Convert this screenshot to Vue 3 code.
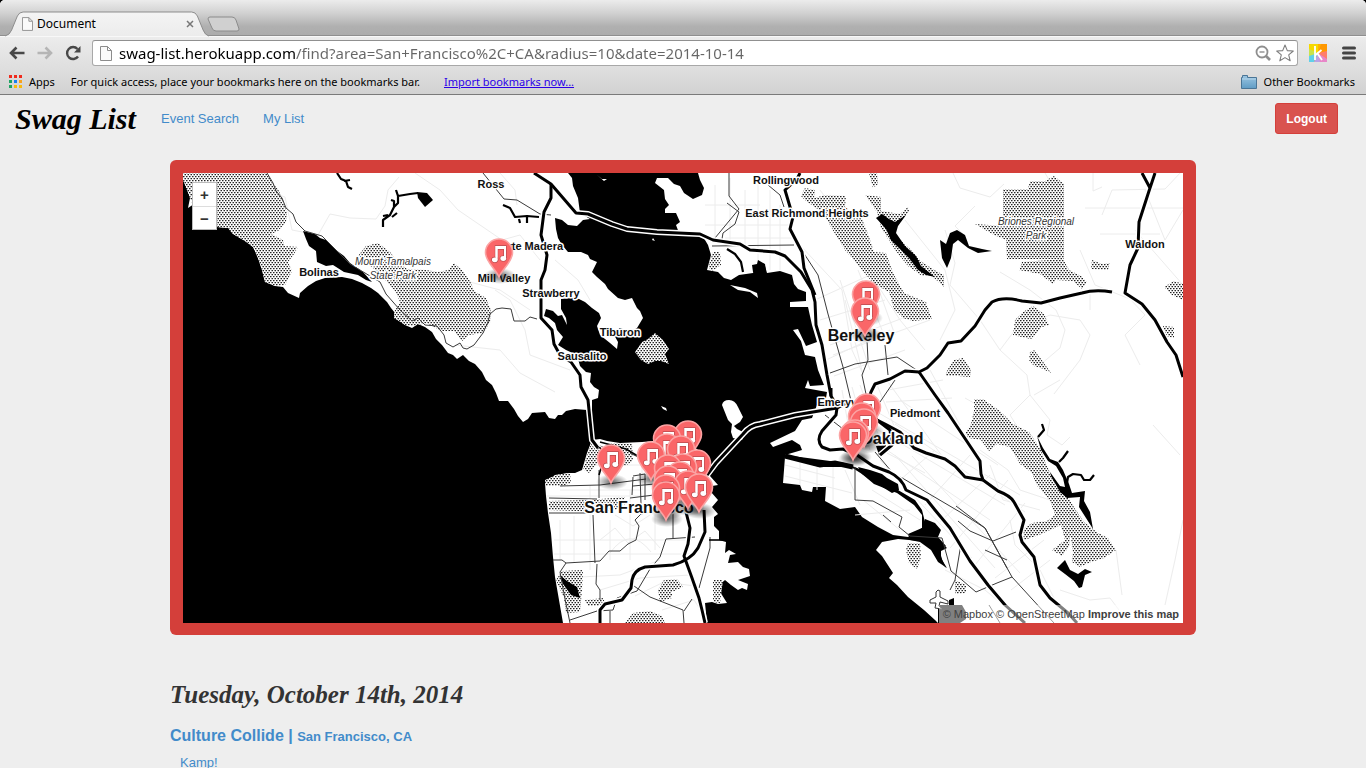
<script setup>
import { ref } from 'vue'

const address = ref('swag-list.herokuapp.com/find?area=San+Francisco%2C+CA&radius=10&date=2014-10-14')

const appDots = ['#f02a1d', '#f02a1d', '#f02a1d', '#1fa463', '#1a7ff0', '#f9a11b', '#1fa463', '#f9b90b', '#f9b90b']

const pins = [
  [499, 253], [866, 295], [865, 312],
  [867, 408], [862, 417], [864, 423], [855, 434], [853, 436],
  [688, 435], [667, 439], [667, 448], [681, 450], [651, 456], [611, 459],
  [697, 464], [683, 468], [668, 469], [680, 476], [668, 480], [688, 485],
  [699, 488], [666, 489], [666, 496]
]

const towns = [
  ['Ross', 491, 188], ['Corte Madera', 528, 250], ['Mill Valley', 504, 282], ['Strawberry', 551, 297],
  ['Tiburon', 620, 336], ['Sausalito', 582, 360], ['Bolinas', 319, 276], ['Rollingwood', 786, 184],
  ['East Richmond Heights', 807, 217], ['Waldon', 1145, 248], ['Emeryville', 845, 406], ['Piedmont', 915, 417]
]
const cities = [['San Francisco', 639, 513], ['Berkeley', 861, 341], ['Oakland', 892, 444]]
const parks = [['Mount Tamalpais', 393, 265], ['State Park', 393, 279], ['Briones Regional', 1036, 225], ['Park', 1036, 239]]

const water = 'M183 180L187 188L190 198L188 208L194 204L200 222L217 227L228 228L233 234L245 241L253 247L258 258L262 270L265 282L275 286L283 287L288 293L299 298L300 293L308 286L316 281L325 278L342 277L352 279L362 283L371 288L378 293L387 302L391 308L395 313L394 318L399 320L405 325L412 328L418 324L425 327L432 332L436 339L442 345L448 353L453 355L457 359L463 355L469 361L475 364L482 372L486 380L492 385L496 393L499 401L508 401L514 409L518 416L523 422L528 419L532 413L545 412L549 418L555 419L558 415L562 415L566 411L575 409L587 410L592 409L592 400L598 398L599 390L594 387L590 382L591 373L586 372L580 366L577 355L566 350L558 345L563 337L557 330L555 323L549 318L544 316L546 309L553 311L558 316L562 315L567 325L566 318L561 309L561 299L572 298L579 299L585 302L592 308L599 313L601 318L597 326L600 335L610 343L617 349L618 342L613 333L620 328L630 332L637 328L643 318L640 311L637 308L632 298L625 300L618 298L608 289L605 284L597 277L592 272L597 262L590 259L588 255L581 252L568 252L562 245L558 238L556 229L555 218L562 220L568 225L577 226L583 220L590 219L580 213L578 198L573 186L572 178L568 173L698 173L700 180L704 188L702 195L693 199L684 193L680 186L674 184L668 178L657 178L655 183L664 190L665 199L669 205L665 209L665 213L676 213L680 222L676 225L679 233L702 235L708 245L711 255L707 270L718 272L724 278L731 280L739 275L753 273L755 265L765 266L767 273L780 271L792 275L794 284L798 289L806 292L806 301L790 302L790 307L808 307L812 325L817 342L806 346L798 329L793 330L801 341L805 355L815 357L818 370L824 385L810 386L808 380L805 388L827 392L826 398L817 405L812 418L802 420L795 431L770 443L773 447L792 440L800 445L802 450L785 455L845 463L862 470L875 478L898 490L915 500L922 510L925 522L934 524L940 530L937 538L947 548L941 551L941 557L946 568L940 561L937 554L929 546L920 541L898 539L882 542L876 550L882 556L893 573L889 578L897 585L908 597L924 610L935 620L938 623H183Z'
const port = 'M785 457L820 467L851 467L862 474L874 484L884 488L897 493L914 505L922 515L922 528L908 537L893 535L878 527L862 517L855 507L840 509L825 501L826 487L813 487L812 492L802 490L800 485L783 483Z'
const city = 'M592 440L587 453L582 470L575 473L568 473L562 474L555 475L545 483L546 496L548 513L551 533L553 557L555 577L563 623H707L705 603L712 602L718 604L727 603L722 595L717 587L725 580L731 585L738 590L742 588L747 590L748 584L738 580L750 576L749 569L743 567L738 562L728 563L730 555L736 554L729 550L725 553L726 542L719 540L719 531L714 526L714 517L718 514L712 507L718 500L711 492L712 486L718 485L710 476L707 465L702 453L685 440H665L642 442L620 443L607 441L600 439Z'

const hatch = [
  'M183 173H267L272 182L279 191L284 204L287 213L286 222L278 231L271 234L283 240L284 246L298 247L294 254L288 262L292 271L285 285L275 286L265 282L262 270L258 258L253 247L245 241L233 234L228 228L217 227L200 222L190 198L183 180Z',
  'M358 256L366 246L378 243L390 252L398 262L407 269L426 270L438 272L448 270L454 263L462 270L470 281L474 291L486 298L491 310L490 323L483 333L469 335L462 341L454 331L441 331L427 323L412 326L405 325L394 318L394 312L400 302L396 292L386 281L374 269Z',
  'M635 352L642 342L648 339L655 333L663 340L669 349L665 354L669 364L661 361L655 361L648 364L641 360Z',
  'M801 196L805 188L815 190L814 198L826 195L846 196L845 207L862 219L869 237L874 252L886 253L893 273L904 293L926 302L932 319L913 321L903 318L894 309L889 292L873 283L858 265L845 250L834 232L822 212L806 201Z',
  'M869 173L877 173L878 184L873 188ZM865 195L881 197L881 211L900 214L908 207L909 211L893 233L910 249L922 262L936 271L944 275L944 287L932 276L922 276L908 266L896 251L881 228L877 212Z',
  'M1003 189H1028L1030 181L1045 181L1054 176L1064 184V259H1007L1006 240L994 235L975 224L1003 226Z',
  'M1022 262L1063 259L1069 270L1081 276L1087 282L1082 289L1073 281L1056 280L1053 284L1040 274L1019 270Z',
  'M1023 312L1033 306L1044 314L1049 325L1042 327L1031 339L1013 335L1015 320Z',
  'M954 360L963 358L971 370L970 377L958 376L945 376L948 369Z',
  'M1030 352L1034 350L1041 359L1046 366L1051 373L1041 368L1034 366L1029 360Z',
  'M1092 260L1102 264L1110 263L1108 270L1091 269ZM1164 287L1174 281L1183 284V300L1172 295ZM1163 326L1174 327L1174 338L1166 336Z',
  'M974 399L983 399L1000 411L1013 424L1029 432L1040 448L1046 464L1053 479L1067 495L1075 509L1084 522L1098 533L1108 538L1116 550L1104 558L1091 562L1080 567L1072 562L1073 552L1071 538L1066 524L1070 536L1069 547L1062 556L1052 550L1065 540L1061 525L1039 535L1024 540L1022 530L1032 523L1047 521L1055 515L1050 500L1038 487L1031 472L1020 464L1010 447L997 444L989 451L981 440L963 437L971 424L974 411Z',
  'M713 252L720 252L721 265L712 271L708 267Z',
  'M592 440L588 453L583 469L589 473L597 463L600 448L611 443L632 444L633 461L625 466L618 452L605 448ZM545 480L556 475L570 473L571 483L562 486L546 486ZM549 501L589 500L625 497L624 508L604 512L549 510Z',
  'M562 571L583 570L582 590L580 612L566 613L564 598L556 580ZM585 600L604 598V606L588 606ZM658 590L664 580L677 579L683 587L672 592L672 598L660 602ZM625 623L633 613L650 611L662 616L665 623ZM713 580L723 580L720 603L713 602Z',
  'M908 543H920L921 557L917 569L909 563L906 550ZM955 580L966 585L966 593L955 594Z'
]

const lakes = [
  'M303 231L315 234L320 238L326 240L336 250L344 256L350 263L363 272L372 282L366 280L358 275L344 272L333 265L326 266L317 262L316 251L309 246L306 239Z',
  'M876 218L882 214L889 219L895 222L906 215L898 226L896 233L905 246L916 256L921 266L935 277L926 275L918 270L909 258L900 249L891 240L886 229Z',
  'M940 240L946 244L950 233L957 230L965 235L969 246L982 249L992 251L978 253L968 248L958 240L953 244L951 258L947 268L942 258Z',
  'M1037 436L1043 448L1050 459L1058 462L1063 470L1069 484L1072 493L1085 491L1084 501L1090 512L1093 529L1086 518L1079 507L1080 497L1067 498L1060 492L1051 476L1050 472L1060 486L1065 487L1063 478L1056 466L1048 461L1041 450Z',
  'M1057 568L1065 560L1070 570L1078 574L1085 569L1092 572L1085 575L1082 587L1079 588L1074 581L1065 574Z',
  'M858 467L870 470L882 474L887 478L898 484L899 490L892 493L884 488L873 481L862 474ZM876 446L886 445L885 453L879 455Z',
  'M908 534L922 528L925 519L935 523L941 530L938 537L946 546L940 551L942 560L947 568L938 562L931 550L920 542L910 540Z',
  'M560 575L567 581L577 587L580 598L571 595L563 584Z',
  'M417 192L427 193L433 200L425 207L418 198Z',
  'M752 265L757 264L758 260L765 264L766 271L753 272Z'
]

const creeks = [
  'M337 173L341 179L346 181L348 187L352 189M344 181L350 180',
  'M383 227L383 220L390 215L394 207L394 201L391 200M394 207L398 203L398 196L396 190M398 196L410 194L418 193M392 217L397 213M388 215L383 216',
  'M1042 424L1044 430L1038 437M1059 462L1063 458L1068 451',
  'M1067 483L1068 477L1073 474L1081 475L1084 480L1090 480L1094 475',
  'M503 205L510 208L515 217L527 216L539 217M527 216V223M519 219L520 223',
  'M727 249L735 254L741 262L743 272'
]

const faint = [
  'M267 191L285 197L292 230L318 235L330 214L350 218L376 219L385 206L388 190L399 177',
  'M415 173L440 190L458 210L480 225L502 240L520 235L540 260M500 173L515 190L517 205M555 260L578 280L590 300M495 290L510 300L525 330L530 355L570 370',
  'M440 300L470 282L500 290L530 310M455 345L500 350L520 373L555 392',
  'M705 205H760M705 225H790M715 185V240M730 178V245M745 190V250M758 180V265M770 190V270M780 205V270M725 238H795',
  'M820 190L850 230L868 270L900 320L925 350M800 245L842 290L852 350L862 372M815 300L870 275M820 320L885 300M826 360L890 330M840 280L870 370M905 220L945 270L955 310L940 340',
  'M830 345L925 310M833 355L930 320M834 376L905 350M858 270L882 330M869 262L895 335M845 300L863 375',
  'M953 173L960 188L990 197L1004 184M975 206L955 226L965 236M1000 272L1030 290L1056 310L1065 330L1060 348L1040 365M1000 350L1015 330L1050 315L1080 320L1090 335L1080 360L1054 394M1034 395L1060 380',
  'M1093 173V191L1102 187M1102 215L1112 190L1165 189L1183 170M1085 208H1183M1100 234H1160M1090 290V310M1080 250L1095 285L1130 299L1145 315L1125 335L1140 365M1135 230L1183 285M1145 190L1165 240L1183 210',
  'M1045 173L1054 188M945 230L955 263L950 285L980 320L1000 350L1027 375L1030 395L1050 420L1047 435L1062 445L1070 437M1030 395L1010 415L1032 450',
  'M1153 425L1180 455M1183 520L1175 560L1165 605M1116 550L1122 595M1060 590L1090 600L1110 598L1119 610',
  'M546 496H650M554 540H692M554 554H690M560 520V560M574 516V562M590 485V570M610 520V560M630 490V560M642 460V490M655 500V550M560 578L620 575L660 560M600 590L640 578L690 575M592 465H680M560 490H640',
  'M600 540L615 528L628 543L645 531L660 548M615 515L633 526L650 515M610 553Q630 525 651 552M662 610L694 600L704 615M635 596L664 582L695 586',
  'M785 465L835 478M785 476L852 493M800 460V485M817 465V490M833 467V500M845 470L860 505M863 500L900 530M872 490L920 520M855 515L910 510',
  'M850 425L990 520M858 418L1005 505M865 405L1020 495M895 424L1025 512M900 400L960 440L998 465M887 453L925 473M880 460L972 558M895 455L995 568M912 456L1020 573',
  'M842 390L850 435M852 387L870 450M860 385L882 445M877 385L900 440M885 378L945 460M930 370L960 425M888 390L943 380M886 402L952 398',
  'M900 480L935 450M925 505L970 455M940 522L990 475M950 548L1008 480M975 565L1025 503M995 578L1044 540M1011 590L1050 560M945 570L985 590L1015 615',
  'M965 398L1025 432L1040 460M980 450L1008 470L1020 490L1050 500M990 465L1003 500L1040 510M1010 520L1015 545L1040 570L1060 610'
]

const thin = [
  'M267 173L273 183L276 191L282 198L286 208L293 214L296 222L305 231L322 236L350 264L380 282L386 294L400 310L412 321L418 318L425 325L437 326L444 335L446 343L453 347L460 343L463 348L467 349L474 345L483 333L488 322L490 314L496 309L502 308L511 309L514 321L525 321L530 317L537 319',
  'M483 173L504 199L517 200L540 214L551 215',
  'M729 173V196L739 209L715 238M727 203L739 212L735 224L723 233L722 239M712 246L794 245',
  'M768 185L780 195L784 207M803 252L818 275L828 314L843 367L852 405M867 340L868 360L862 375L866 394M885 345L888 375M830 373L855 364L897 357L918 371M895 380L880 402',
  'M560 486L600 485L646 479M599 470V498M549 513H593M593 515L595 563M549 498L597 499M633 477L632 495M633 476L645 474L645 500M640 473L641 504M633 486L665 483M630 498L670 493M673 514V538',
  'M553 560L562 560L566 563L600 561L609 551L620 551L628 544L636 540L639 526L635 520L641 514L660 510M566 563L560 572L565 599L570 623M570 620L597 611L613 610L617 598L637 591L650 569L660 557L666 539L695 537M597 564L596 584L600 590V600M610 611L610 623M710 537L710 548L699 588',
  'M634 586L650 597L683 610L684 623M684 611L692 599M630 453L640 458',
  'M855 467V500L873 501L902 517L899 527L910 536L942 538L951 571L962 580L976 592L997 583L1012 577L1054 623M825 415L843 429',
  'M875 452L892 472L960 512L985 528L1007 568M1012 577L985 528L956 506M958 521L970 531L993 541L1016 532M958 541L960 550L955 580L950 590M985 550L1007 560',
  'M1000 623L989 605M883 515L891 522'
]

const minor = ['M592 440L598 445L605 455L599 475', 'M600 442L615 446L626 449L636 455L650 456', 'M709 540L725 540', 'M688 470L687 500']

const major = [
  'M534 173L551 184L576 213L588 214L612 224L627 229L657 232L700 234L713 240L740 244L750 250L775 252L785 256L801 272L812 290L815 302L816 325L822 345L827 375L831 396',
  'M551 184L551 198L544 212L541 235L547 255L545 270L541 280L541 318L552 330L554 344L560 355L571 362L580 375L581 387L588 400L592 440L598 448',
  'M800 173L797 179L785 190L793 217L790 229L802 252L804 268L815 295',
  'M1142 173L1150 188M1155 173L1149 191L1139 222L1138 248L1130 265L1125 293L1142 304L1155 320L1167 342L1176 355L1183 377',
  'M1112 292Q1095 289 1082 293L1060 298L1041 303L1022 301Q1003 296 992 302L985 310L975 326L961 341L948 343L940 355L927 368L919 372L905 371L890 379L875 384L871 392L868 400',
  'M919 372L935 395L948 413L964 437L980 461L981 474L983 480',
  'M983 480L965 477L955 466L945 459L926 453L914 448L900 432L885 424L877 420L869 410',
  'M983 480L998 491Q1011 496 1014 502L1024 520L1020 535L1022 542L1034 557L1040 585L1050 598L1068 613L1077 623',
  'M707 475L716 463L743 434Q750 425 760 424L795 415L837 408L850 402',
  'M837 408L836 415L822 431Q816 440 822 447L830 450L843 449L857 455L873 466L889 472Q902 478 906 490L927 500L935 510L950 528L970 561L988 585L1005 605L1025 623',
  'M831 388L831 396L838 408M877 420L890 430L892 445L880 455',
  'M704 510L705 532L698 548Q691 560 673 565L645 567Q634 570 632 580L631 588L622 600L605 604L600 610V623',
  'M686 512L690 528L688 544L684 556L692 578L699 598L702 610L705 623'
]
const bay = 'M785 456L820 465L835 463L853 467'
</script>

<template>
  <div class="window">
    <header class="chrome">
      <div class="tabstrip">
        <div class="tab">
          <svg class="tab-shape" viewBox="0 0 210 25" preserveAspectRatio="none" aria-hidden="true">
            <path d="M0 25Q5 24 7 19L13 5Q15 1 19 1H196Q200 1 202 5L208 19Q210 24 214 25" fill="url(#tabfill)" stroke="#8b8b8b" />
            <defs><linearGradient id="tabfill" x2="0" y2="1"><stop stop-color="#f4f4f4" /><stop offset="1" stop-color="#ececec" /></linearGradient></defs>
          </svg>
          <svg class="doc small" viewBox="0 0 12 15" aria-hidden="true"><path d="M.5.5H7.5L11.5 4.500V14.500H.5ZM7.500.5V4.500H11.500" fill="#fafafa" stroke="#8c8c8c" /></svg>
          <span class="tab-title">Document</span>
          <button class="close" aria-label="Close tab"><svg viewBox="0 0 8 8"><path d="M1 1L7 7M7 1L1 7" stroke="#777" stroke-width="1.500" /></svg></button>
        </div>
        <button class="newtab" aria-label="New tab"><svg viewBox="0 0 33 17"><path d="M3 1H25Q28 1 29 4L32 13Q32 15 30 15H9Q6 15 5 12L1 3Q1 1 3 1Z" fill="#d0d0d0" stroke="#8c8c8c" /></svg></button>
      </div>
      <div class="toolbar">
        <button class="tool" aria-label="Back"><svg viewBox="0 0 16 14"><path d="M7.500 1.500L2 7L7.500 12.500M2 7H15.500" fill="none" stroke="#484848" stroke-width="2.600" /></svg></button>
        <button class="tool" aria-label="Forward"><svg viewBox="0 0 16 14"><path d="M8.500 1.500L14 7L8.500 12.500M14 7H.5" fill="none" stroke="#b5b5b5" stroke-width="2.600" /></svg></button>
        <button class="tool" aria-label="Reload"><svg viewBox="0 0 16 16"><path d="M13 11.500A6 6 0 1 1 12.500 4" fill="none" stroke="#484848" stroke-width="2.400" /><path d="M15.500 1V7.500H9Z" fill="#484848" /></svg></button>
        <div class="omnibox">
          <svg class="doc" viewBox="0 0 12 15" aria-hidden="true"><path d="M.5.5H7.500L11.500 4.500V14.500H.5ZM7.500.5V4.500H11.500" fill="#fafafa" stroke="#8c8c8c" /></svg>
          <input v-model="address" class="url" aria-label="Address" spellcheck="false" />
          <button class="mini" aria-label="Zoom"><svg viewBox="0 0 16 16"><circle cx="7" cy="7" r="5.500" fill="#fff" stroke="#8e8e8e" stroke-width="1.800" /><path d="M4.500 7H9.500" stroke="#8e8e8e" stroke-width="1.400" /><path d="M11 11L15 15" stroke="#8e8e8e" stroke-width="2.600" /></svg></button>
          <button class="mini star" aria-label="Bookmark this page"><svg viewBox="0 0 18 18"><path d="M9 1L11.300 6.600L17.300 7L12.700 10.900L14.200 16.800L9 13.600L3.800 16.800L5.300 10.900L.7 7L6.700 6.600Z" fill="#fff" stroke="#7e7e7e" stroke-width="1.100" stroke-linejoin="round" /></svg></button>
        </div>
        <button class="ext" aria-label="Extension">
          <svg viewBox="0 0 18 18"><rect width="18" height="18" rx="1" fill="#ffb400" /><path d="M9 9L9 0H0V9Z" fill="#f6d900" /><path d="M9 9L0 5V13Z" fill="#c8e34c" /><path d="M9 9L0 12V18H5Z" fill="#5fd0ea" /><path d="M9 9L5 18H12Z" fill="#b9a3e6" /><path d="M9 9L11 18H18V13Z" fill="#e886c8" /><path d="M9 9L18 15V6Z" fill="#ff7d6b" /><path d="M9 9L18 7V0H12Z" fill="#ff9800" /><path d="M6 2V16M12.500 6L6.500 11M8.500 9.500L13 16" fill="none" stroke="#fff" stroke-width="1.800" /></svg>
        </button>
        <button class="menu" aria-label="Menu"><svg viewBox="0 0 14 14"><path d="M1.500 2H12.500M1.500 7H12.500M1.500 12H12.500" stroke="#444" stroke-width="3" stroke-linecap="round" /></svg></button>
      </div>
      <div class="bookmarks">
        <a class="apps" href="#"><span class="dots"><i v-for="(c, i) in appDots" :key="i" :style="{ background: c }"></i></span>Apps</a>
        <span class="hint">For quick access, place your bookmarks here on the bookmarks bar.</span>
        <a class="import" href="#">Import bookmarks now...</a>
        <a class="other" href="#">
          <svg viewBox="0 0 16 14" aria-hidden="true"><path d="M.5 13.500V2.500H1.500V.5H6.500V2.500H15.500V13.500Z" fill="url(#folder)" stroke="#4a7596" /><path d="M1 4H15" stroke="#b7d6ea" /><defs><linearGradient id="folder" x2="0" y2="1"><stop stop-color="#9cc6e2" /><stop offset="1" stop-color="#5f9cc5" /></linearGradient></defs></svg>
          Other Bookmarks
        </a>
      </div>
    </header>

    <main class="page">
      <nav class="nav">
        <a class="brand" href="#">Swag List</a>
        <a class="link" href="#">Event Search</a>
        <a class="link" href="#">My List</a>
        <button class="logout">Logout</button>
      </nav>

      <div class="container">
        <section class="frame" aria-label="Event map">
          <div class="map">
            <svg class="canvas" viewBox="183 173 1000 450">
              <defs>
                <pattern id="dots" width="3" height="4" patternUnits="userSpaceOnUse">
                  <rect width="3" height="4" fill="#fff" />
                  <path d="M0 0H1.500V1.300H0ZM1.500 2H3V3.300H1.500Z" fill="#222" />
                </pattern>
                <radialGradient id="shade"><stop stop-opacity=".6" /><stop offset="1" stop-opacity="0" /></radialGradient>
                <g id="pin">
                  <ellipse cx="1" cy="23" rx="16" ry="8" fill="url(#shade)" />
                  <path d="M0 24C-3 16-13.500 9-13.500-.5A13.500 13.500 0 0 1 13.500-.5C13.500 9 3 16 0 24Z" fill="#fa6668" stroke="#fba3a3" stroke-width="1.600" />
                  <g stroke="#b94b4d" stroke-width="1.400" fill="#fff" paint-order="stroke">
                    <path d="M-3.500-7H7V5H5V-4H-1.500V6.500H-3.500Z" />
                    <ellipse cx="-4.200" cy="6.800" rx="2.900" ry="2.400" /><ellipse cx="4.300" cy="5.500" rx="2.900" ry="2.400" />
                    <path d="M-3.500-7H7V5H5V-4H-1.500V6.500H-3.500Z" stroke="none" />
                  </g>
                </g>
              </defs>
              <rect x="183" y="173" width="1000" height="450" fill="#fff" />
              <path :d="water" />
              <path :d="port" fill="#fff" />
              <path :d="city" fill="#fff" />
              <path d="M722 405Q723 400 729 400Q735 400 738 407L743 417L740 422L734 426L728 420ZM732 424L737 429L745 433L742 440L733 438L731 432ZM661 406L666 408L667 411L663 409ZM597 175L602 179L607 179L604 181ZM653 238L655 241L652 240ZM730 285L745 288L757 293L758 298L750 292L738 290Z" fill="#fff" />
              <path v-for="(d, i) in faint" :key="'f' + i" :d="d" fill="none" stroke="#ececec" />
              <path v-for="(d, i) in hatch" :key="'h' + i" :d="d" fill="url(#dots)" />
              <path v-for="(d, i) in lakes" :key="'l' + i" :d="d" />
              <path v-for="(d, i) in creeks" :key="'c' + i" :d="d" fill="none" stroke="#000" stroke-width="2.200" stroke-linejoin="round" />
              <path v-for="(d, i) in thin" :key="'t' + i" :d="d" fill="none" stroke="#3a3a3a" />
              <path v-for="(d, i) in minor" :key="'n' + i" :d="d" fill="none" stroke="#000" stroke-width="1.600" />
              <path :d="bay" fill="none" stroke="#000" stroke-width="5" />
              <path v-for="(d, i) in major" :key="'w' + i" :d="d" class="casing" />
              <path v-for="(d, i) in major" :key="'m' + i" :d="d" class="highway" />
              <path d="M938 605H949V600L954 598V605H962L966 612V619L960 623H938Z" fill="#000" />
              <path d="M938 590L940 591V597L948 601V604L940 602L939 606L942 609L935 608L936 603L930 603V600L936 597V592Z" fill="#fff" stroke="#333" />
              <text v-for="t in parks" :key="t[0]" class="label park" :x="t[1]" :y="t[2]">{{ t[0] }}</text>
              <text v-for="t in towns" :key="t[0]" class="label town" :x="t[1]" :y="t[2]">{{ t[0] }}</text>
              <text v-for="t in cities" :key="t[0]" class="label city" :x="t[1]" :y="t[2]">{{ t[0] }}</text>
              <use v-for="(p, i) in pins" :key="i" href="#pin" :x="p[0]" :y="p[1]" />
            </svg>
            <div class="zoom">
              <button aria-label="Zoom in">+</button>
              <button aria-label="Zoom out">−</button>
            </div>
            <div class="credit"><a href="#">© Mapbox</a> <a href="#">© OpenStreetMap</a> <a href="#"><b>Improve this map</b></a></div>
          </div>
        </section>

        <h2 class="date">Tuesday, October 14th, 2014</h2>
        <h4 class="event"><a href="#">Culture Collide | <small>San Francisco, CA</small></a></h4>
        <a class="artist" href="#">Kamp!</a>
      </div>
    </main>
  </div>
</template>

<style>
body { margin: 0; background: #000; }
</style>

<style scoped>
.window { display: flex; flex-direction: column; height: 100vh; overflow: hidden; border-radius: 5px 5px 0 0; background: #eee; font-family: "Liberation Sans", Arial, sans-serif; }
button { padding: 0; border: 0; background: none; font: inherit; }
svg { display: block; }
a { text-decoration: none; }

.chrome { flex: none; border-bottom: 1px solid #7a7a7a; background: #ddd; font-family: "Noto Sans", "Open Sans", sans-serif; color: #000; }
.tabstrip { display: flex; align-items: flex-end; height: 35px; padding-left: 5px; border-bottom: 1px solid #8f8f8f; background: linear-gradient(#ececec, #cfcfcf 40%, #b0b0b0 75%, #acacac); }
.tab { position: relative; display: flex; align-items: center; width: 200px; height: 25px; margin-bottom: -1px; padding: 0 11px 0 17px; box-sizing: border-box; }
.tab-shape { position: absolute; inset: 0; width: 100%; height: 100%; overflow: visible; }
.doc { position: relative; flex: none; width: 12px; height: 15px; }
.doc.small { width: 11px; height: 14px; }
.tab-title { position: relative; flex: 1; margin-left: 4px; font-size: 12px; line-height: 16px; }
.close { position: relative; width: 8px; height: 8px; }
.newtab { width: 33px; height: 17px; margin: 0 0 2px 2px; }
.toolbar { display: flex; align-items: center; height: 32px; padding: 0 10px 0 9px; border-top: 1px solid #f8f8f8; background: linear-gradient(#ececec, #dedede); }
.tool { width: 16px; margin-right: 12px; }
.omnibox { display: flex; flex: 1; align-items: center; height: 26px; margin-left: -1px; padding: 0 3px 0 7px; box-sizing: border-box; border: 1px solid #a8a8a8; border-top-color: #909090; border-radius: 3px; background: #fff; }
.url { flex: 1; min-width: 0; height: 22px; margin-left: 7px; padding: 0; border: 0; outline: 0; font: 15px/22px "Noto Sans", "Open Sans", sans-serif; color: transparent; background: linear-gradient(90deg, #000 177px, #666 177px); -webkit-background-clip: text; background-clip: text; }
.mini { width: 16px; margin-left: 6px; }
.mini.star { width: 18px; margin-left: 5px; }
.ext { width: 18px; margin-left: 11px; }
.menu { width: 14px; margin-left: 15px; }
.bookmarks { display: flex; align-items: center; height: 25px; padding: 0 11px 0 9px; background: linear-gradient(#dedede, #d2d2d2); font-size: 11px; line-height: 16px; white-space: nowrap; }
.bookmarks a { color: #000; }
.apps { display: flex; align-items: center; gap: 7px; }
.dots { display: grid; grid-template-columns: repeat(3, 3px); gap: 2px; }
.dots i { height: 3px; }
.hint { margin-left: 16px; }
.bookmarks .import { margin-left: 24px; color: #2a00e8; text-decoration: underline; }
.other { display: flex; align-items: center; gap: 7px; margin-left: auto; }
.other svg { width: 16px; height: 14px; }

.page { flex: 1; min-height: 0; overflow: hidden; color: #333; }
.nav { display: flex; align-items: center; height: 47px; padding: 0 28px 0 15px; }
.brand { width: 119px; margin-right: 27px; font: italic bold 30px/38px "Liberation Serif", serif; color: #000; white-space: nowrap; }
.link { margin-right: 24px; font-size: 13px; line-height: 18px; color: #428bca; }
.logout { height: 31px; margin-left: auto; padding: 0 10px; border: 1px solid #d43f3a; border-radius: 3px; background: #d9534f; color: #fff; font-size: 12px; font-weight: bold; }
.container { max-width: 1026px; margin: 18px auto 0; }
.frame { padding: 13px 13px 12px; border-radius: 6px; background: #d43f3a; }
.map { position: relative; overflow: hidden; }
.canvas { width: 100%; height: auto; }
.casing, .highway { fill: none; stroke-linejoin: round; }
.casing { stroke: #fff; stroke-width: 6px; }
.highway { stroke: #000; stroke-width: 3px; }
.label { font-family: "Liberation Sans", Arial, sans-serif; text-anchor: middle; stroke: #fff; stroke-width: 3px; stroke-linejoin: round; paint-order: stroke; fill: #111; }
.town { font-size: 11px; font-weight: bold; }
.city { font-size: 16px; font-weight: bold; }
.park { font-size: 10px; font-style: italic; fill: #333; }
.zoom { position: absolute; top: 10px; left: 10px; width: 23px; background: #fff; box-shadow: 0 0 0 1px #bbb; }
.zoom button { display: block; width: 100%; height: 23px; color: #333; font-size: 15px; font-weight: bold; line-height: 23px; }
.zoom button + button { border-top: 1px solid #ddd; }
.credit { position: absolute; right: 0; bottom: 0; padding: 0 4px; background: rgba(255, 255, 255, .5); font-size: 11px; line-height: 18px; }
.credit a { color: #404040; }
.date { margin: 43px 0 0; font: italic bold 25px/34px "Liberation Serif", serif; }
.event { margin: 14px 0 0; font-size: 16px; line-height: 20px; }
.event small { font-size: 13px; }
.event a, .artist { color: #428bca; }
.artist { display: inline-block; margin: 7px 0 0 10px; font-size: 13px; line-height: 18px; }
</style>
